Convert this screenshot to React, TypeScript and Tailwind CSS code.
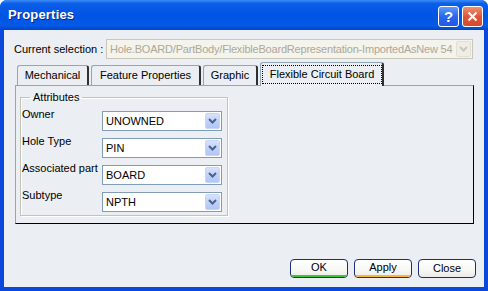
import React from "react";

function Chevron({ color }: { color: string }) {
  return (
    <svg width="9" height="6" viewBox="0 0 9 6" fill="none">
      <path d="M1 1L4.5 4.5L8 1" stroke={color} strokeWidth="2" />
    </svg>
  );
}

function Combo({ value }: { value: string }) {
  return (
    <div className="w-[120px] h-[20px] bg-white border border-[#7f9db9] flex items-center pl-[3px] pr-[1px]">
      <span className="flex-1 leading-[13px] pt-[1px]">{value}</span>
      <div className="w-[15px] h-[16px] rounded-[2px] bg-[linear-gradient(180deg,#d6e2fd_0%,#bccffa_60%,#b0c6f6_100%)] border border-[#c8d6f9] flex items-center justify-center">
        <Chevron color="#4d6185" />
      </div>
    </div>
  );
}

function Tab({ label, width, active }: { label: string; width: string; active?: boolean }) {
  if (active) {
    return (
      <div className={`${width} h-[24px] -mb-[1px] relative z-10 bg-[#ebeef2] border-l border-t border-[#91a7b4] border-r-2 border-r-[#303030] rounded-t-[3px] flex items-start justify-center pt-[2px] pl-[1px]`}>
        <span className="border border-dotted border-black px-[7px] leading-[17px] whitespace-nowrap">{label}</span>
      </div>
    );
  }
  return (
    <div className={`${width} h-[20px] bg-[#ebeef2] border-l border-t border-[#91a7b4] border-r-2 border-r-[#303030] rounded-t-[3px] flex items-center justify-center`}>
      <span className="leading-[13px] whitespace-nowrap">{label}</span>
    </div>
  );
}

function Button({ label, accent }: { label: string; accent?: string }) {
  return (
    <div className="w-[58px] h-[19px] rounded-[4px] border border-[#1c2f73] bg-[linear-gradient(180deg,#ffffff_0%,#f7f7f4_60%,#ecebe6_100%)] flex flex-col overflow-hidden">
      <div className="flex-1 flex items-center justify-center leading-[13px]">{label}</div>
      {accent && <div className={`h-[2px] mx-[1px] ${accent}`} />}
    </div>
  );
}

const rows = [
  { label: "Owner", value: "UNOWNED" },
  { label: "Hole Type", value: "PIN" },
  { label: "Associated part", value: "BOARD" },
  { label: "Subtype", value: "NPTH" },
];

export default function App() {
  return (
    <div className="w-[488px] h-[291px] flex flex-col bg-[#0a48dc] rounded-t-[7px] overflow-hidden font-['Liberation_Sans',Arial,sans-serif] text-[11px] text-black">
      {/* title bar */}
      <div className="h-[30px] shrink-0 flex items-center pl-[8px] pr-[5px] bg-[linear-gradient(180deg,#3c8cf6_0%,#0a5ee8_12%,#0054e3_50%,#0459e6_85%,#0046c8_100%)]">
        <span className="text-white font-bold text-[13px] tracking-[0.2px] [text-shadow:1px_1px_0_#0a2a8a]">Properties</span>
        <div className="ml-auto flex gap-[3px] pt-[3px]">
          <div className="w-[21px] h-[21px] rounded-[3px] border border-white bg-[linear-gradient(180deg,#5b9bff_0%,#2a66f0_50%,#1f58e6_100%)] flex items-center justify-center text-white font-bold text-[15px] leading-none">
            ?
          </div>
          <div className="w-[21px] h-[21px] rounded-[3px] border border-white bg-[linear-gradient(180deg,#f0906e_0%,#e0553a_50%,#d24a2c_100%)] flex items-center justify-center">
            <svg width="11" height="11" viewBox="0 0 11 11">
              <path d="M1.5 1.5L9.5 9.5M9.5 1.5L1.5 9.5" stroke="white" strokeWidth="2.2" />
            </svg>
          </div>
        </div>
      </div>

      {/* body */}
      <div className="flex-1 mx-[4px] mb-[4px] bg-[#ebeef2] flex flex-col">
        <div className="mt-[9px] pl-[10px] flex items-center">
          <span className="w-[92px]">Current selection :</span>
          <div className="w-[367px] h-[20px] bg-[#f4f3ec] border border-[#c9c7ba] flex items-center pl-[3px] pr-[1px]">
            <span className="flex-1 min-w-0 whitespace-nowrap text-[#aca899] leading-[13px] tracking-[-0.2px]">
              Hole.BOARD/PartBody/FlexibleBoardRepresentation-ImportedAsNew 54
            </span>
            <div className="w-[15px] h-[16px] shrink-0 rounded-[2px] bg-[#eeede6] border border-[#e2e0d6] flex items-center justify-center">
              <Chevron color="#c9c7ba" />
            </div>
          </div>
        </div>

        <div className="mt-[3px] ml-[13px] h-[23px] flex items-end gap-[2px]">
          <Tab label="Mechanical" width="w-[72px]" />
          <Tab label="Feature Properties" width="w-[110px]" />
          <Tab label="Graphic" width="w-[55px]" />
          <Tab label="Flexible Circuit Board" width="w-[124px]" active />
        </div>

        <div className="ml-[11px] w-[459px] h-[139px] border-l border-t border-[#91a7b4] border-r border-b border-r-black border-b-black">
          <fieldset className="ml-[4px] mt-[5px] w-[208px] h-[125px] border border-[#c5c3b4] shadow-[inset_1px_1px_0_#fff,1px_1px_0_#fff]">
            <legend className="ml-[9px] px-[3px] leading-[13px]">Attributes</legend>
            <div className="pt-[7px] flex flex-col gap-[7px]">
              {rows.map((r) => (
                <div key={r.label} className="h-[20px] flex items-start">
                  <span className="w-[81px] pl-[1px] -mt-[3px] leading-[13px]">{r.label}</span>
                  <Combo value={r.value} />
                </div>
              ))}
            </div>
          </fieldset>
        </div>

        <div className="mt-auto mb-[9px] pr-[8px] flex justify-end gap-[6px]">
          <Button label="OK" accent="bg-[#3ec43c]" />
          <Button label="Apply" accent="bg-[#f5b73a]" />
          <Button label="Close" />
        </div>
      </div>
    </div>
  );
}
